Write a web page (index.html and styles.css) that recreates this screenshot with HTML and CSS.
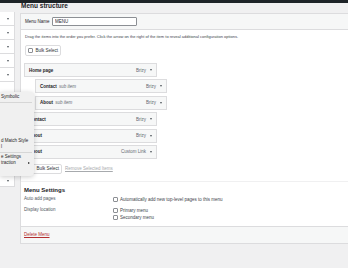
FILE: index.html
```html
<!DOCTYPE html>
<html lang="en">

<head>
    <meta charset="UTF-8">
    <meta name="viewport" content="width=device-width, initial-scale=1.0">
    <title>Menus</title>
    <link rel="stylesheet" href="styles.css">
</head>

<body>

    <div class="topbar"></div>

    <div class="layout">
        <!-- Left accordion (add menu items) -->
        <div class="sidebar">
            <div class="side-row"><span class="caret"></span></div>
            <div class="side-row"><span class="caret"></span></div>
            <div class="side-row"><span class="caret"></span></div>
            <div class="side-row"><span class="caret"></span></div>
            <div class="side-row"><span class="caret"></span></div>
            <div class="side-open"></div>
            <div class="side-row last"><span class="caret"></span></div>
        </div>

        <div class="main">
            <h2 class="title">Menu structure</h2>

            <div class="panel">
                <div class="panel-header">
                    <label for="menu-name">Menu Name</label>
                    <input type="text" id="menu-name" value="MENU">
                </div>

                <div class="panel-body">
                    <p class="hint">Drag the items into the order you prefer. Click the arrow on the right of the item to reveal additional configuration options.</p>

                    <div class="bulk"><span class="check"></span>Bulk Select</div>

                    <ul class="menu-items">
                        <li class="item"><span class="item-title"><b>Home page</b></span><span class="item-type">Brizy <i class="arrow"></i></span></li>
                        <li class="item sub"><span class="item-title"><b>Contact</b> <em>sub item</em></span><span class="item-type">Brizy <i class="arrow"></i></span></li>
                        <li class="item sub"><span class="item-title"><b>About</b> <em>sub item</em></span><span class="item-type">Brizy <i class="arrow"></i></span></li>
                        <li class="item"><span class="item-title"><b>Contact</b></span><span class="item-type">Brizy <i class="arrow"></i></span></li>
                        <li class="item"><span class="item-title"><b>About</b></span><span class="item-type">Brizy <i class="arrow"></i></span></li>
                        <li class="item"><span class="item-title"><b>About</b></span><span class="item-type">Custom Link <i class="arrow"></i></span></li>
                    </ul>

                    <div class="bulk-actions">
                        <div class="bulk"><span class="check"></span>Bulk Select</div>
                        <a href="#" class="remove">Remove Selected Items</a>
                    </div>
                </div>

                <div class="settings">
                    <h3>Menu Settings</h3>
                    <div class="settings-row">
                        <span class="settings-label">Auto add pages</span>
                        <div class="options">
                            <div class="option"><span class="check"></span>Automatically add new top-level pages to this menu</div>
                        </div>
                    </div>
                    <div class="settings-row">
                        <span class="settings-label">Display location</span>
                        <div class="options">
                            <div class="option"><span class="check"></span>Primary menu</div>
                            <div class="option"><span class="check"></span>Secondary menu</div>
                        </div>
                    </div>
                </div>

                <div class="panel-footer">
                    <a href="#" class="delete">Delete Menu</a>
                </div>
            </div>
        </div>
    </div>

    <!-- Right-click menu lying over the page -->
    <div class="context-menu">
        <div class="cm-item">Symbolic</div>
        <div class="cm-sep"></div>
        <div class="cm-space"></div>
        <div class="cm-item">d Match Style</div>
        <div class="cm-item">l</div>
        <div class="cm-sep"></div>
        <div class="cm-item">e Settings</div>
        <div class="cm-item">traction <span class="cm-arrow"></span></div>
    </div>

</body>

</html>
```

FILE: styles.css
```css
/* Basic reset */
* {
    margin: 0;
    padding: 0;
    box-sizing: border-box;
}

body {
    font-family: "Liberation Sans", Arial, sans-serif;
    background-color: #f0f0f1;
    color: #1d2327;
    width: 348px;
    height: 268px;
    overflow: hidden;
    position: relative;
}

.topbar {
    height: 3px;
    background-color: #1d2327;
}

.layout {
    display: flex;
    align-items: flex-start;
}

/* Left accordion */
.sidebar {
    width: 15px;
    flex-shrink: 0;
    margin-top: 9px;
    background-color: white;
    border-right: 1px solid #dcdcde;
    border-bottom: 1px solid #dcdcde;
}

.side-row {
    height: 14px;
    border-bottom: 1px solid #dcdcde;
    display: flex;
    align-items: center;
    justify-content: center;
    padding-left: 1px;
}

.side-row.last {
    height: 11px;
    border-bottom: none;
}

.side-open {
    height: 93px;
}

.caret,
.arrow {
    display: inline-block;
    width: 0;
    height: 0;
    border-left: 1.5px solid transparent;
    border-right: 1.5px solid transparent;
    border-top: 2px solid #50575e;
}

/* Main column */
.main {
    width: 340px;
    flex-shrink: 0;
    margin-left: 5px;
}

.title {
    font-size: 6.5px;
    font-weight: 600;
    line-height: 7px;
    margin-top: -1px;
    margin-bottom: 4px;
    padding-left: 1px;
}

.panel {
    background-color: white;
    border: 1px solid #dcdcde;
}

.panel-header {
    height: 16px;
    background-color: #f6f7f7;
    border-bottom: 1px solid #dcdcde;
    display: flex;
    align-items: center;
    padding-left: 4px;
}

.panel-header label {
    width: 27px;
    font-size: 4.5px;
}

.panel-header input {
    width: 85px;
    height: 9px;
    border: 1px solid #8c8f94;
    border-radius: 1px;
    font-family: inherit;
    font-size: 4.5px;
    padding: 0 2px;
    color: #1d2327;
}

.panel-body {
    padding: 0 4px 7px 3px;
}

.hint {
    font-size: 4px;
    line-height: 5px;
    margin-top: 4px;
    margin-left: 1px;
    color: #3c434a;
}

.bulk {
    display: inline-flex;
    align-items: center;
    gap: 2.5px;
    height: 11px;
    width: 36px;
    margin-top: 4.5px;
    margin-left: 1px;
    padding-left: 2px;
    border: 1px solid #dcdcde;
    border-radius: 2px;
    font-size: 4.5px;
    color: #2c3338;
    white-space: nowrap;
}

.check {
    display: inline-block;
    width: 5px;
    height: 5px;
    border: 1px solid #8c8f94;
    border-radius: 1px;
    background-color: white;
    flex-shrink: 0;
}

/* Menu items */
.menu-items {
    list-style: none;
    margin-top: 6px;
}

.item {
    width: 133px;
    height: 14px;
    margin-bottom: 2.4px;
    background-color: #f6f7f7;
    border: 1px solid #dcdcde;
    display: flex;
    align-items: center;
    justify-content: space-between;
    padding: 0 4px 0 4px;
    font-size: 4.5px;
}

.item.sub {
    width: 132px;
    margin-left: 11px;
}

.item-title b {
    font-weight: 600;
}

.item-title em {
    font-style: italic;
    color: #646970;
    margin-left: 1px;
}

.item-type {
    display: flex;
    align-items: center;
    gap: 4px;
    color: #646970;
}

.bulk-actions {
    display: flex;
    align-items: center;
    margin-top: 4.6px;
}

.bulk-actions .bulk {
    margin-top: 0;
    width: 37px;
    height: 10px;
    padding-left: 3px;
}

.remove {
    margin-left: 3px;
    font-size: 4.5px;
    color: #a7aaad;
}

/* Menu settings */
.settings {
    border-top: 1px solid #f0f0f1;
    padding: 5px 3px 5px 3px;
}

.settings h3 {
    font-size: 6px;
    font-weight: 600;
    line-height: 6px;
}

.settings-row {
    display: grid;
    grid-template-columns: 89px 1fr;
    margin-top: 3.5px;
    font-size: 4.5px;
}

.settings-label {
    line-height: 6px;
    color: #50575e;
}

.option {
    display: flex;
    align-items: center;
    gap: 2px;
    line-height: 7px;
    color: #3c434a;
}

.panel-footer {
    height: 17px;
    background-color: #f6f7f7;
    border-top: 1px solid #dcdcde;
    padding-left: 3px;
    display: flex;
    align-items: center;
}

.delete {
    font-size: 4.5px;
    color: #b32d2e;
}

/* Context menu */
.context-menu {
    position: absolute;
    left: 0;
    top: 92px;
    width: 34px;
    height: 84px;
    padding-top: 2px;
    background-color: #f0f0f0;
    border-radius: 0 4px 4px 0;
    box-shadow: 0 1px 5px rgba(0, 0, 0, 0.2);
    font-size: 4.5px;
    color: #262626;
}

.cm-item {
    display: flex;
    align-items: center;
    justify-content: space-between;
    line-height: 6px;
    padding: 0 4px 0 1px;
    white-space: nowrap;
}

.cm-sep {
    height: 1px;
    margin: 1.5px 2px 1.5px 0;
    background-color: #d6d6d6;
}

.cm-space {
    height: 34px;
}

.cm-arrow {
    display: inline-block;
    width: 0;
    height: 0;
    border-top: 1.5px solid transparent;
    border-bottom: 1.5px solid transparent;
    border-left: 2px solid #262626;
}
```
